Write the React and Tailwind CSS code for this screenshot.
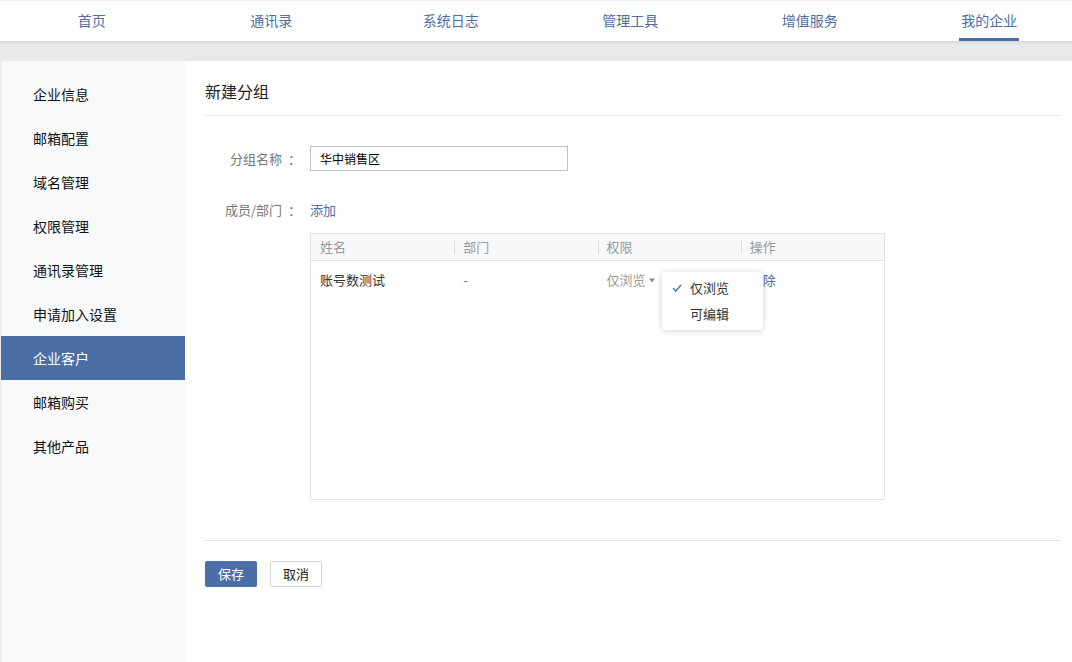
import React from 'react';

const navItems = ['首页', '通讯录', '系统日志', '管理工具', '增值服务', '我的企业'];

const sideItems = [
  '企业信息',
  '邮箱配置',
  '域名管理',
  '权限管理',
  '通讯录管理',
  '申请加入设置',
  '企业客户',
  '邮箱购买',
  '其他产品',
];

const font = { fontFamily: '"Noto Sans CJK SC", "Noto Sans", sans-serif' };

const HeaderCell = ({ children, first }) => (
  <div className="flex items-center h-full">
    <span className={`w-px h-[14px] ${first ? 'bg-transparent' : 'bg-[#e0e0e0]'}`} />
    <span className="pl-[8px]">{children}</span>
  </div>
);

// label with the colon set apart, as in the original form
const FieldLabel = ({ children }) => (
  <label className="w-[105px] shrink-0 flex justify-end text-[13px] text-[#777]">
    <span>{children}</span>
    <span className="ml-[6px] w-[22px]">：</span>
  </label>
);

const App = () => {
  return (
    <div className="w-[1072px] h-[662px] bg-[#e8e9eb] overflow-hidden flex flex-col" style={font}>
      {/* Top nav */}
      <div className="h-[41px] bg-white border-t border-[#eeeeee] shadow-[0_1px_3px_rgba(0,0,0,0.12)] relative z-10 flex items-stretch pl-[2px]">
        {navItems.map((label) => (
          <div key={label} className="w-[179.5px] shrink-0 flex justify-center items-stretch">
            <span
              className={`flex items-center text-[14px] text-[#4d6ea3] ${
                label === '我的企业' ? 'border-b-[3px] border-[#4a6ea5] px-[2px] pt-[2px]' : 'pb-[1px]'
              }`}
            >
              {label}
            </span>
          </div>
        ))}
      </div>

      <div className="h-[20px] shrink-0" />

      {/* Body */}
      <div className="flex-1 flex pl-[1px]">
        <div className="flex-1 flex bg-white rounded-tl-[4px] overflow-hidden">
          {/* Sidebar */}
          <div className="w-[184px] bg-[#f8f9fb] pt-[11px] shrink-0">
            {sideItems.map((s) => (
              <div
                key={s}
                className={`h-[44px] flex items-center pl-[32px] text-[14px] ${
                  s === '企业客户' ? 'bg-[#4a6ea5] text-white' : 'text-[#111]'
                }`}
              >
                {s}
              </div>
            ))}
          </div>

          {/* Main */}
          <div className="flex-1 pl-[20px] pr-[11px]">
            <div className="pt-[20px] pb-[14px] border-b border-[#e8e8e8]">
              <h2 className="text-[16px] leading-[20px] text-[#222]">新建分组</h2>
            </div>

            <div className="mt-[30px] flex items-center">
              <FieldLabel>分组名称</FieldLabel>
              <div className="w-[258px] h-[25px] border border-[#b9c1cd] px-[9px] flex items-center text-[12px] text-black">
                华中销售区
              </div>
            </div>

            <div className="mt-[29px] flex items-center h-[20px]">
              <FieldLabel>成员/部门</FieldLabel>
              <span className="text-[13px] text-[#4a6ea5]">添加</span>
            </div>

            {/* Members table */}
            <div className="mt-[13px] ml-[105px] w-[575px] h-[267px] border border-[#e3e3e3]">
              <div className="h-[27px] bg-[#f7f8fa] border-b border-[#e3e3e3] grid grid-cols-4 text-[13px] text-[#999]">
                <HeaderCell first>姓名</HeaderCell>
                <HeaderCell>部门</HeaderCell>
                <HeaderCell>权限</HeaderCell>
                <HeaderCell>操作</HeaderCell>
              </div>
              <div className="relative h-[38px] grid grid-cols-4 text-[13px]">
                <div className="flex items-center pl-[9px] text-[#333]">账号数测试</div>
                <div className="flex items-center pl-[9px] text-[#777]">-</div>
                <div className="flex items-center pl-[9px] text-[#999]">
                  仅浏览
                  <svg className="ml-[3px]" width="6" height="5" viewBox="0 0 6 5">
                    <path d="M0 0.5 L6 0.5 L3 4.5 Z" fill="#888" />
                  </svg>
                </div>
                <div className="flex items-center pl-[9px] text-[#4a6ea5]">删除</div>

                {/* Permission dropdown */}
                <div className="absolute left-[351px] top-[11px] w-[101px] py-[3px] bg-white rounded-[3px] shadow-[0_1px_6px_rgba(0,0,0,0.18)] text-[13px] text-[#333]">
                  <div className="h-[26px] flex items-center pl-[10px]">
                    <span className="w-[18px] flex items-center">
                      <svg width="10" height="8" viewBox="0 0 10 8">
                        <path d="M1 4.2 L3.8 7 L9 1" fill="none" stroke="#4a6ea5" strokeWidth="1.3" />
                      </svg>
                    </span>
                    仅浏览
                  </div>
                  <div className="h-[26px] flex items-center pl-[28px]">可编辑</div>
                </div>
              </div>
            </div>

            <div className="mt-[40px] border-t border-[#e3e3e3]" />

            <div className="mt-[20px] flex gap-[13px]">
              <button className="w-[52px] h-[26px] bg-[#4a6ea5] text-white text-[13px] rounded-[2px]">保存</button>
              <button className="w-[52px] h-[26px] bg-white border border-[#d4d4d4] text-[#222] text-[13px] rounded-[2px]">
                取消
              </button>
            </div>
          </div>
        </div>
      </div>
    </div>
  );
};

export default App;
